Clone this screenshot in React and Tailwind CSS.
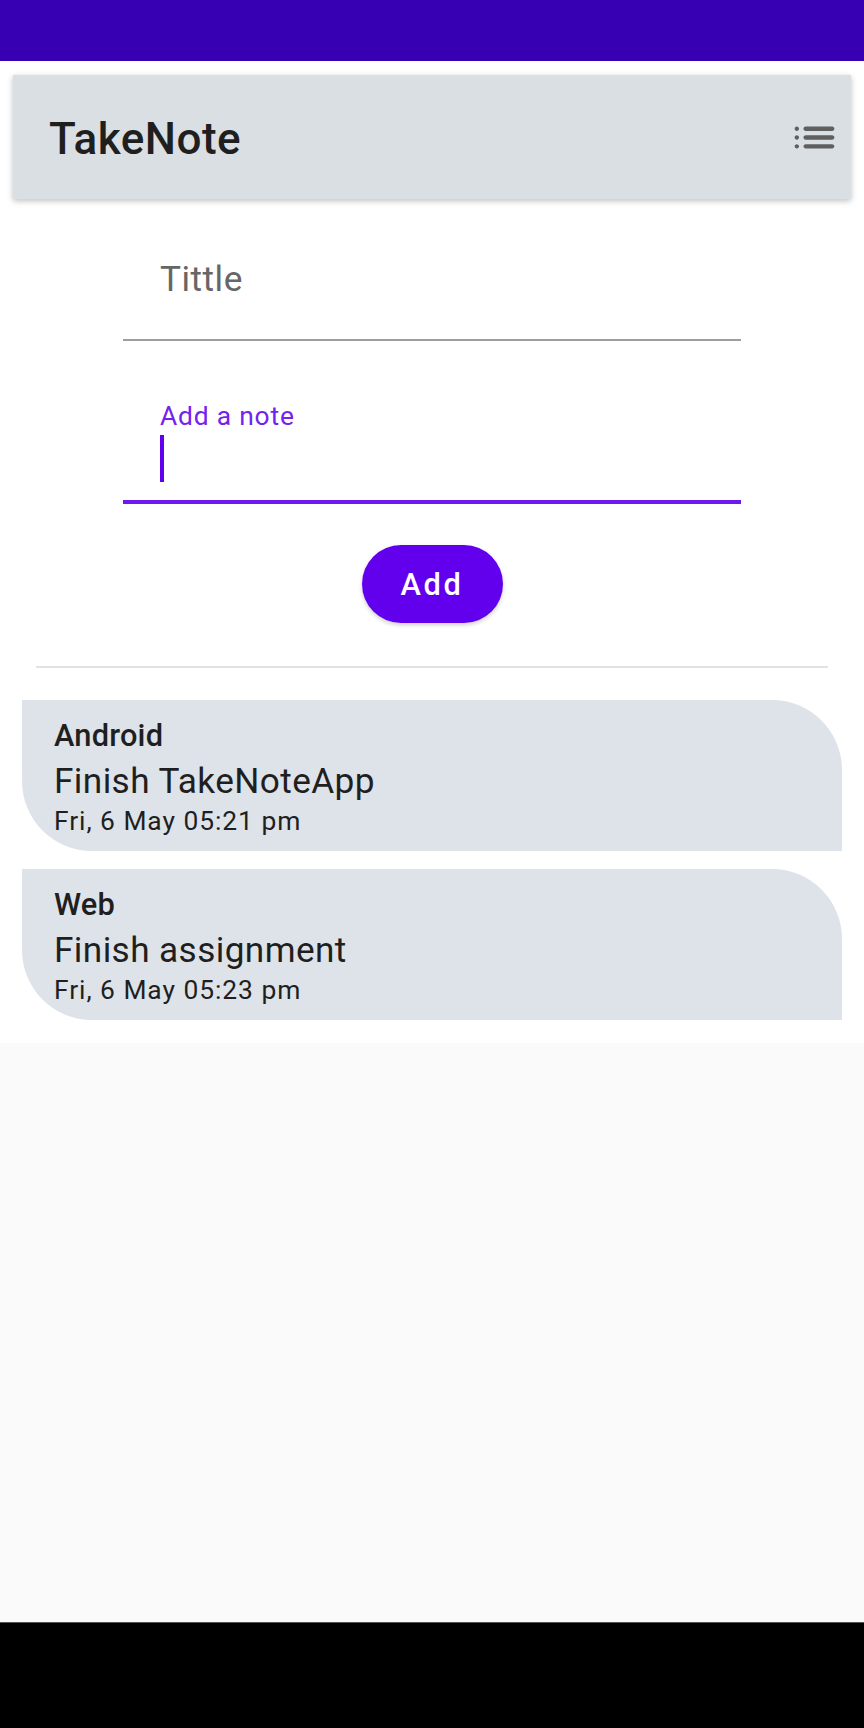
import React from "react";

function ListIcon() {
  return (
    <svg viewBox="0 0 24 24" className="w-[53px] h-[53px]" fill="#5f5f5f">
      <path d="M4 13c.55 0 1-.45 1-1s-.45-1-1-1-1 .45-1 1 .45 1 1 1zm0 4c.55 0 1-.45 1-1s-.45-1-1-1-1 .45-1 1 .45 1 1 1zm0-8c.55 0 1-.45 1-1s-.45-1-1-1-1 .45-1 1 .45 1 1 1zm4 4h12c.55 0 1-.45 1-1s-.45-1-1-1H8c-.55 0-1 .45-1 1s.45 1 1 1zm0 4h12c.55 0 1-.45 1-1s-.45-1-1-1H8c-.55 0-1 .45-1 1s.45 1 1 1zM7 8c0 .55.45 1 1 1h12c.55 0 1-.45 1-1s-.45-1-1-1H8c-.55 0-1 .45-1 1z" />
    </svg>
  );
}

function NoteCard({ category, text, date }) {
  return (
    <div className="mx-[22px] bg-[#dee3e9] rounded-tr-[70px] rounded-bl-[70px] pl-[32px] pt-[18px] pb-[14px] flex flex-col text-[#1f1f1f]">
      <div className="text-[30.8px] leading-[36px] font-medium tracking-[0.2px]">{category}</div>
      <div className="mt-[7px] text-[35.2px] leading-[41px] tracking-[0.4px]">{text}</div>
      <div className="mt-[3px] text-[26.4px] leading-[32px] tracking-[0.95px]">{date}</div>
    </div>
  );
}

export default function App() {
  return (
    <div
      className="h-[1728px] w-[864px] flex flex-col bg-white"
      style={{ fontFamily: "Roboto, 'Noto Sans', sans-serif" }}
    >
      <div className="h-[61px] bg-[#3700b3] shrink-0" />
      <div className="flex flex-col pb-[23px]">
        <div className="mt-[14px] mx-[13px] h-[124px] bg-[#dadfe3] shadow-[0_2px_6px_rgba(0,0,0,0.25)] flex items-center justify-between">
          <div className="pl-[36px] pt-[4px] text-[44px] leading-[52px] font-medium text-[#1f1f1f] tracking-[0.5px]">
            TakeNote
          </div>
          <div className="mr-[10px] flex items-center">
            <ListIcon />
          </div>
        </div>

        <div className="pt-[60px] mx-[123px] flex flex-col">
          <div className="border-b-2 border-[#9e9e9e] pl-[37px] pb-[39px]">
            <div className="text-[35.2px] leading-[41px] text-[#666666] tracking-[0.5px]">Tittle</div>
          </div>
          <div className="mt-[60px] border-b-[4px] border-[#7019ee] pl-[37px] pb-[18px]">
            <div className="text-[26.4px] leading-[31px] text-[#7422ee] tracking-[0.8px]">Add a note</div>
            <div className="mt-[3px] h-[47px] w-[4px] bg-[#6200ee]" />
          </div>
        </div>

        <div className="mt-[41px] flex justify-center">
          <button className="h-[78px] w-[141px] pt-[3px] rounded-full bg-[#6200ee] text-white text-[30.8px] font-medium tracking-[2.6px] shadow-[0_2px_4px_rgba(0,0,0,0.2)] flex items-center justify-center">
            Add
          </button>
        </div>

        <div className="mt-[43px] mx-[36px] h-[2px] bg-[#e2e2e2]" />

        <div className="mt-[32px] flex flex-col gap-[18px]">
          <NoteCard category="Android" text="Finish TakeNoteApp" date="Fri, 6 May 05:21 pm" />
          <NoteCard category="Web" text="Finish assignment" date="Fri, 6 May 05:23 pm" />
        </div>
      </div>
      <div className="flex-1 bg-[#fafafa]" />
      <div className="h-[106px] shrink-0 bg-black border-t border-[#555]" />
    </div>
  );
}
